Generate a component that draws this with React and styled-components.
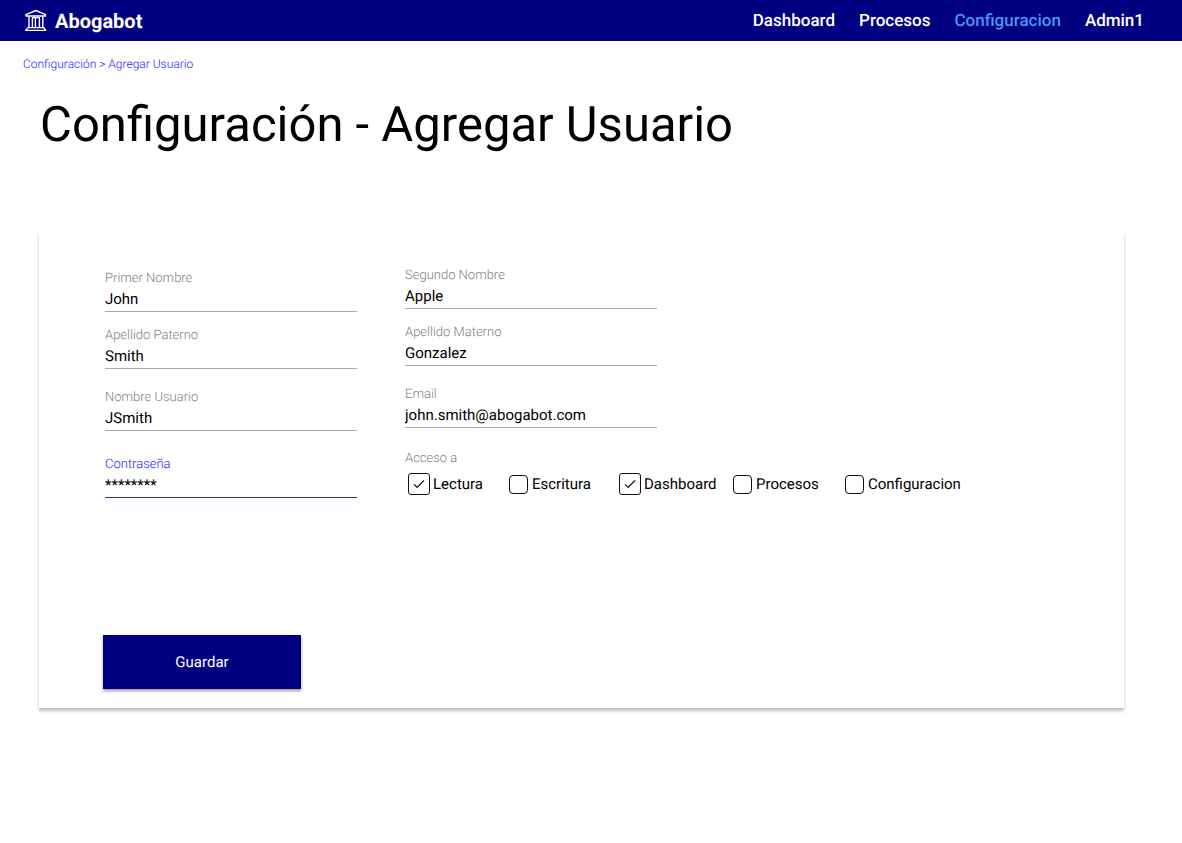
import React from "react";
import styled, { createGlobalStyle } from "styled-components";

const Global = createGlobalStyle`
  *, *::before, *::after { box-sizing: border-box; }
  body {
    margin: 0;
    background: #fff;
    color: #000;
    font-family: Roboto, "Liberation Sans", sans-serif;
    text-rendering: geometricPrecision;
  }
`;

const Header = styled.header`
  display: flex;
  align-items: center;
  justify-content: space-between;
  height: 41px;
  padding: 0 38px 0 24px;
  background: #000080;
`;

const Brand = styled.a`
  display: flex;
  align-items: center;
  gap: 7px;
  color: #fff;
  font-size: 20px;
  line-height: 24px;
  font-weight: 700;
  text-decoration: none;
`;

const Nav = styled.nav`
  display: flex;
  gap: 24px;
`;

const NavLink = styled.a`
  color: ${(p) => (p.$active ? "#4397f7" : "#fff")};
  font-size: 17px;
  line-height: 20px;
  font-weight: 500;
  text-decoration: none;
`;

const Breadcrumb = styled.nav`
  padding: 16px 23px 0;
  color: #2222ff;
  font-size: 12px;
  line-height: 14px;
  font-weight: 300;
`;

const Crumb = styled.a`
  color: inherit;
  text-decoration: none;
`;

const Title = styled.h1`
  margin: 24px 40px 0;
  font-size: 49px;
  line-height: 60px;
  font-weight: 400;
`;

const Card = styled.form`
  margin: 76px 58px 48px 39px;
  padding: 35px 64px 19px;
  background: #fff;
  box-shadow: 0 3px 3px rgba(0, 0, 0, 0.25);
`;

const Columns = styled.div`
  display: flex;
  gap: 48px;
  padding-left: 2px;
`;

const Column = styled.div`
  display: flex;
  flex-direction: column;
  flex: ${(p) => (p.$wide ? "1" : "none")};
  padding-top: ${(p) => (p.$wide ? "0" : "3px")};
`;

const Field = styled.div`
  display: flex;
  flex-direction: column;
  width: 252px;
  margin-bottom: ${(p) => p.$space || 0}px;
  border-bottom: 1px solid ${(p) => (p.$active ? "#2222ff" : "#a8a8a8")};
`;

const Label = styled.label`
  color: ${(p) => (p.$active ? "#2222ff" : "#808080")};
  font-size: 13px;
  line-height: 19px;
  font-weight: 300;
`;

const TextInput = styled.input`
  height: 23px;
  padding: 0;
  border: 0;
  outline: 0;
  background: transparent;
  color: #000;
  font: 400 15px/23px Roboto, "Liberation Sans", sans-serif;
  text-rendering: inherit;
`;

const Access = styled.fieldset`
  min-width: 0;
  margin: 0;
  padding: 0;
  border: 0;
`;

const Legend = styled.legend`
  padding: 0;
  color: #808080;
  font-size: 13px;
  line-height: 19px;
  font-weight: 300;
`;

const Options = styled.div`
  display: grid;
  grid-template-columns: 99px 112px 112px 112px auto;
  justify-content: start;
  padding: 5px 0 0 3px;
`;

const Option = styled.label`
  display: flex;
  align-items: center;
  gap: 3px;
  font-size: 15px;
  line-height: 22px;
`;

const Tick = styled.span`
  display: grid;
  place-items: center;
  width: 22px;
  height: 22px;

  > * { grid-area: 1 / 1; }
  svg { pointer-events: none; visibility: hidden; }
  input:checked + svg { visibility: visible; }
`;

const Box = styled.input`
  appearance: none;
  width: 19px;
  height: 19px;
  margin: 0;
  border: 1px solid #111;
  border-radius: 4px;
  background: #fff;

  &:checked {
    width: 22px;
    height: 22px;
    border-radius: 3px;
  }
`;

const Save = styled.button`
  display: block;
  width: 198px;
  height: 54px;
  margin-top: 137px;
  padding: 0;
  border: 0;
  background: #000080;
  color: #fff;
  font: 400 15px/18px Roboto, "Liberation Sans", sans-serif;
  text-rendering: inherit;
  box-shadow: 0 2px 3px rgba(0, 0, 0, 0.4);
`;

function CourtIcon() {
  return (
    <svg width="24" height="24" viewBox="0 0 24 24" fill="none" stroke="#fff" strokeWidth="1.4" strokeLinejoin="round" aria-hidden="true">
      <path d="M2 5.6 11.7 1.5 21.5 5.6V7H2Z" />
      <path d="M5 7V18.6M8.4 18.6V8.6H15.4V18.6M11.4 9V18.6M18.8 7V18.6" />
      <path d="M4 18.6H19.8L21.8 21.4H1.8Z" />
    </svg>
  );
}

function TextField({ id, label, value, type = "text", space, active }) {
  return (
    <Field $space={space} $active={active}>
      <Label htmlFor={id} $active={active}>{label}</Label>
      <TextInput id={id} type={type} defaultValue={value} />
    </Field>
  );
}

function AccessOption({ label, checked }) {
  return (
    <Option>
      <Tick>
        <Box type="checkbox" defaultChecked={checked} />
        <svg width="12" height="10" viewBox="0 0 12 10" fill="none" stroke="#111" strokeWidth="1.3">
          <path d="M1 5.4 4.2 8.4 11 1.4" />
        </svg>
      </Tick>
      {label}
    </Option>
  );
}

export default function App() {
  return (
    <>
      <Global />
      <Header>
        <Brand href="#">
          <CourtIcon />
          Abogabot
        </Brand>
        <Nav>
          <NavLink href="#">Dashboard</NavLink>
          <NavLink href="#">Procesos</NavLink>
          <NavLink href="#" $active>Configuracion</NavLink>
          <NavLink href="#">Admin1</NavLink>
        </Nav>
      </Header>
      <Breadcrumb>
        <Crumb href="#">Configuración</Crumb> &gt; <Crumb href="#">Agregar Usuario</Crumb>
      </Breadcrumb>
      <main>
        <Title>Configuración - Agregar Usuario</Title>
        <Card onSubmit={(e) => e.preventDefault()}>
          <Columns>
            <Column>
              <TextField id="primer" label="Primer Nombre" value="John" space={14} />
              <TextField id="paterno" label="Apellido Paterno" value="Smith" space={19} />
              <TextField id="usuario" label="Nombre Usuario" value="JSmith" space={24} />
              <TextField id="clave" label="Contraseña" value="********" active />
            </Column>
            <Column $wide>
              <TextField id="segundo" label="Segundo Nombre" value="Apple" space={14} />
              <TextField id="materno" label="Apellido Materno" value="Gonzalez" space={19} />
              <TextField id="email" label="Email" type="email" value="john.smith@abogabot.com" space={21} />
              <Access>
                <Legend>Acceso a</Legend>
                <Options>
                  <AccessOption label="Lectura" checked />
                  <AccessOption label="Escritura" />
                  <AccessOption label="Dashboard" checked />
                  <AccessOption label="Procesos" />
                  <AccessOption label="Configuracion" />
                </Options>
              </Access>
            </Column>
          </Columns>
          <Save type="submit">Guardar</Save>
        </Card>
      </main>
    </>
  );
}
